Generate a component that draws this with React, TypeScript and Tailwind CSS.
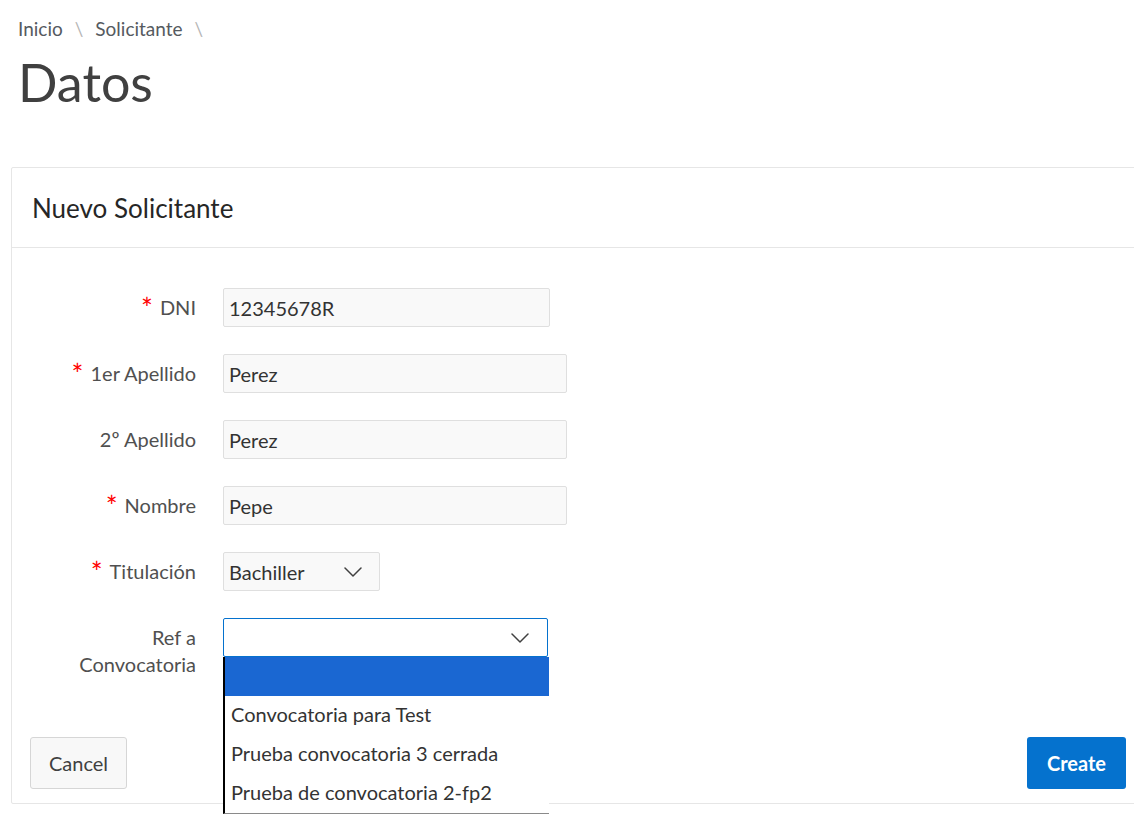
import React from 'react';

// Chevron used by the native-looking select boxes
const Chevron = ({ className }: { className?: string }) => (
  <svg viewBox="0 0 18 10" className={`w-[18px] h-[10px] ${className ?? ''}`} fill="none">
    <path d="M1 1 L9 9 L17 1" stroke="#404040" strokeWidth="1.5" strokeLinecap="round" strokeLinejoin="round" />
  </svg>
);

const Required = () => (
  <span className="relative top-[1px] mr-[7px] inline-block align-top text-[28px] leading-[27px] text-[#ff0000]">*</span>
);

type FieldProps = {
  label: React.ReactNode;
  children: React.ReactNode;
};

const FieldRow = ({ label, children }: FieldProps) => (
  <div className="flex items-start gap-[27px]">
    <div className="ml-[26px] w-[140px] pt-[6px] text-right leading-[27px] text-[#505050]">{label}</div>
    {children}
  </div>
);

const TextField = ({ value, width }: { value: string; width: string }) => (
  <input
    readOnly
    value={value}
    className={`${width} h-[39px] rounded-[2px] border border-[#dfdfdf] bg-[#f9f9f9] px-[5px] text-[#333] outline-none`}
  />
);

const options = ['', 'Convocatoria para Test', 'Prueba convocatoria 3 cerrada', 'Prueba de convocatoria 2-fp2'];

export default function App() {
  return (
    <div className="min-h-[815px] w-full overflow-hidden bg-white font-['Lato','Open_Sans',sans-serif] text-[20px] text-[#404040]">
      {/* breadcrumb + page title */}
      <div className="px-[18px] pt-[16px]">
        <nav className="flex items-center text-[19px] leading-[26px] text-[#555a60]">
          <span>Inicio</span>
          <span className="mx-[12px] text-[#b5b5b5]">\</span>
          <span>Solicitante</span>
          <span className="mx-[12px] text-[#b5b5b5]">\</span>
        </nav>
        <h1 className="mt-[9px] text-[52px] leading-[62px] text-[#404040]">Datos</h1>
      </div>

      {/* region card */}
      <section className="ml-[11px] mt-[54px] w-[1134px] rounded-[2px] border border-[#e6e6e6]">
        <header className="flex h-[80px] items-center border-b border-[#e6e6e6] px-[20px] pt-[2px]">
          <h2 className="text-[26px] text-[#262626]">Nuevo Solicitante</h2>
        </header>

        <div className="px-[18px] pb-[14px] pt-[40px]">
          <div className="flex flex-col gap-[27px]">
            <FieldRow label={<><Required />DNI</>}>
              <TextField value="12345678R" width="w-[327px]" />
            </FieldRow>
            <FieldRow label={<><Required />1er Apellido</>}>
              <TextField value="Perez" width="w-[344px]" />
            </FieldRow>
            <FieldRow label="2º Apellido">
              <TextField value="Perez" width="w-[344px]" />
            </FieldRow>
            <FieldRow label={<><Required />Nombre</>}>
              <TextField value="Pepe" width="w-[344px]" />
            </FieldRow>
            <FieldRow label={<><Required />Titulación</>}>
              <div className="flex h-[39px] w-[157px] items-center justify-between rounded-[2px] border border-[#dfdfdf] bg-[#f9f9f9] pl-[5px] pr-[17px] text-[#333]">
                <span>Bachiller</span>
                <Chevron />
              </div>
            </FieldRow>
            <FieldRow label="Ref a Convocatoria">
              <div className="relative">
                <div className="flex h-[39px] w-[325px] items-center justify-end rounded-[2px] border border-[#0572ce] bg-white pr-[18px]">
                  <Chevron />
                </div>
                {/* open listbox */}
                <ul className="absolute left-0 top-[39px] z-10 w-[326px] border-b border-l-2 border-b-[#8a8a8a] border-l-black bg-white text-[#333]">
                  {options.map((o, i) => (
                    <li
                      key={i}
                      className={`flex h-[39px] items-center pb-[3px] pl-[6px] ${i === 0 ? 'bg-[#1a67d2]' : ''}`}
                    >
                      {o}
                    </li>
                  ))}
                </ul>
              </div>
            </FieldRow>
          </div>

          <div className="mt-[59px] flex items-center justify-between">
            <button className="h-[52px] w-[97px] rounded-[3px] border border-[#d6d6d6] bg-[#f8f8f8] text-[#404040]">
              Cancel
            </button>
            <button className="h-[52px] w-[99px] rounded-[3px] bg-[#0572ce] font-bold text-white">
              Create
            </button>
          </div>
        </div>
      </section>
    </div>
  );
}
